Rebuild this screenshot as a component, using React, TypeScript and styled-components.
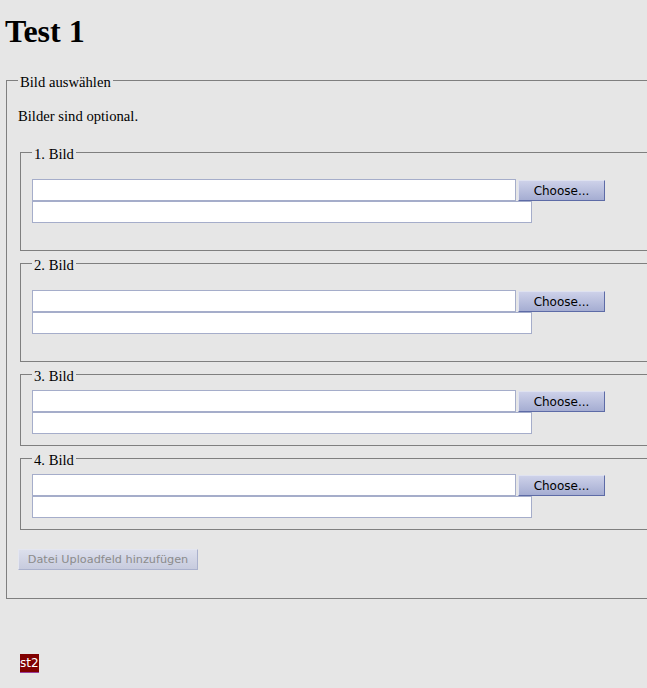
import React from "react";
import styled, { createGlobalStyle } from "styled-components";

const GlobalStyle = createGlobalStyle`
  html, body {
    margin: 0;
    padding: 0;
    background: #e6e6e6;
    overflow: hidden;
  }
  body {
    font-family: "Liberation Serif", "Times New Roman", serif;
    font-size: 14.67px;
    color: #000;
  }
`;

const Page = styled.div`
  padding: 15px 0 0 4px;
`;

const Title = styled.h1`
  margin: 0 0 24px 1px;
  font-family: "Liberation Serif", "Times New Roman", serif;
  font-weight: bold;
  font-size: 32px;
  line-height: 32px;
`;

const Fieldset = styled.fieldset<{ $padTop: number; $padBottom: number; $outer?: boolean }>`
  margin: ${(p) => (p.$outer ? "0 2px" : "3px 2px 0")};
  padding: ${(p) => p.$padTop}px 11px ${(p) => p.$padBottom}px;
  border: 1px solid #7f7f7f;
  min-width: 0;
  width: ${(p) => (p.$outer ? "720px" : "auto")};
  box-sizing: border-box;
`;

const Legend = styled.legend`
  padding: 3px 2px 0;
  font-size: 14.67px;
  line-height: 16px;
`;

const Note = styled.p`
  margin: 13px 0 18px;
  line-height: 17px;
`;

const FileRow = styled.div`
  display: flex;
  align-items: flex-start;
`;

const TextInput = styled.input<{ $width: number }>`
  box-sizing: border-box;
  width: ${(p) => p.$width}px;
  height: 22px;
  margin: 0;
  padding: 1px 3px;
  border: 1px solid #a5adca;
  background: #ffffff;
  font-family: "DejaVu Sans", sans-serif;
  font-size: 12px;
  outline: none;
`;

const ChooseButton = styled.button`
  box-sizing: border-box;
  width: 87px;
  height: 21px;
  margin: 1px 0 0 2px;
  padding: 0;
  border-style: solid;
  border-width: 1px;
  border-color: #dfe2f0 #5d6ba6 #5d6ba6 #dfe2f0;
  background: linear-gradient(#cdd1e9, #a5add2);
  font-family: "DejaVu Sans", sans-serif;
  font-size: 12px;
  color: #000;
`;

const AddButton = styled.button`
  display: block;
  box-sizing: border-box;
  width: 180px;
  height: 21px;
  margin: 19px 0 0 0;
  padding: 0;
  border-style: solid;
  border-width: 1px;
  border-color: #e4e6f0 #aab1cc #aab1cc #e4e6f0;
  background: linear-gradient(#dcdfec, #c7cbde);
  font-family: "DejaVu Sans", sans-serif;
  font-size: 11.25px;
  color: #8b8b8b;
`;

const Badge = styled.a`
  display: inline-block;
  margin: 55px 0 0 16px;
  height: 19px;
  padding: 0;
  box-sizing: border-box;
  background: #800000;
  color: #ffffff;
  font-family: "DejaVu Sans", sans-serif;
  font-size: 12px;
  line-height: 18px;
  text-decoration: none;
  border-bottom: 1px solid #9a3d9a;
`;

const images = [
  { label: "1. Bild", spacious: true },
  { label: "2. Bild", spacious: true },
  { label: "3. Bild", spacious: false },
  { label: "4. Bild", spacious: false },
];

export default function App() {
  return (
    <Page>
      <GlobalStyle />
      <Title>Test 1</Title>
      <Fieldset $outer $padTop={5} $padBottom={28}>
        <Legend>Bild auswählen</Legend>
        <Note>Bilder sind optional.</Note>
        {images.map((img) => (
          <Fieldset
            key={img.label}
            $padTop={img.spacious ? 17 : 6}
            $padBottom={img.spacious ? 27 : 11}
          >
            <Legend>{img.label}</Legend>
            <FileRow>
              <TextInput $width={484} type="text" />
              <ChooseButton type="button">Choose...</ChooseButton>
            </FileRow>
            <FileRow>
              <TextInput $width={500} type="text" />
            </FileRow>
          </Fieldset>
        ))}
        <AddButton type="button" disabled>
          Datei Uploadfeld hinzufügen
        </AddButton>
      </Fieldset>
      <Badge href="#">st2</Badge>
    </Page>
  );
}
